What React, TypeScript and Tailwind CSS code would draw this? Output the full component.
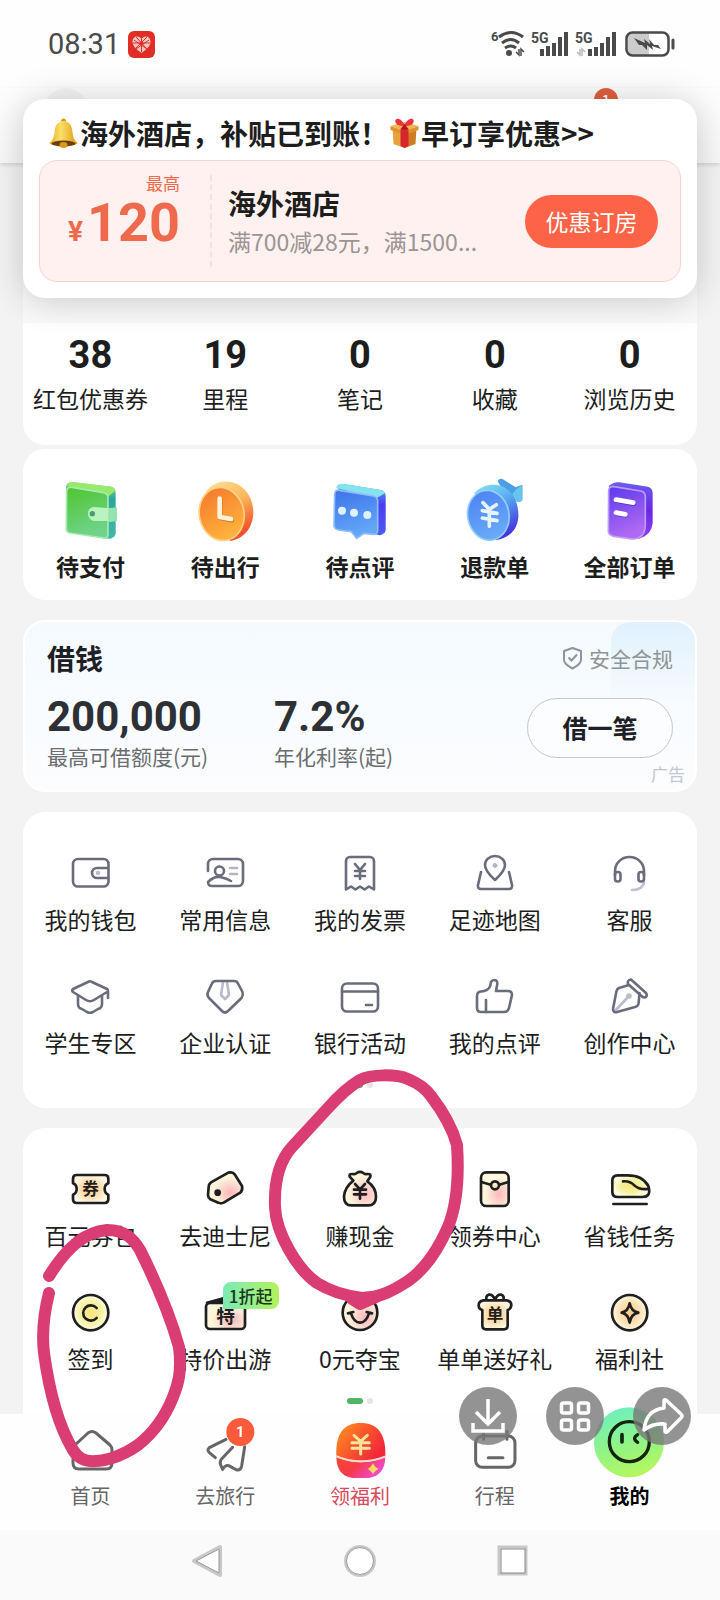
import React from "react";

type Item = { label: string; icon: React.ReactNode; badge?: string };

const DIGITS = "font-[Roboto,'Noto_Sans_CJK_SC',sans-serif]";

/* ---------- status bar ---------- */

function StatusBar() {
  return (
    <header className="flex h-[88px] items-center justify-between bg-[#fefefe] pr-[45px] pl-12">
      <div className="flex items-center gap-2">
        <span className={`${DIGITS} text-[29px] leading-8 text-[#4a4a4a]`}>08:31</span>
        <svg className="h-[27px] w-[27px]" viewBox="0 0 27 27" aria-hidden="true">
          <rect width="27" height="27" rx="6" fill="#e02d26" />
          <path d="M13.500 22C7 17.500 4.500 14 4.500 10.500 4.500 7.500 6.500 5.500 9 5.500c2 0 3.500 1 4.500 2.500C14.500 6.500 16 5.500 18 5.500c2.500 0 4.500 2 4.500 5 0 3.500-2.500 7-9 11.500z" fill="#f9c6c3" />
          <path d="M6 9l13 9M21 9L8 18M13.500 8v13M8 6l11 12M19 6L8 17M5 12h17" stroke="#e02d26" strokeWidth="1" fill="none" />
          <circle cx="13.500" cy="12.500" r="2" fill="#e02d26" />
        </svg>
      </div>
      <svg className="h-[30px] w-[184px]" viewBox="0 0 184 30" aria-label="Wi-Fi 6, 5G, 5G, 电池" role="img">
        <g fill="#4a4a4a" fontFamily="Roboto, sans-serif" fontWeight="700">
          <text x="0" y="12" fontSize="13">6</text>
          <text x="40" y="14" fontSize="14">5G</text>
          <text x="84" y="14" fontSize="14">5G</text>
        </g>
        <g fill="none" stroke="#4a4a4a" strokeWidth="3">
          <path d="M8 8Q20 -1 32 8" />
          <path d="M11 14Q20 7 28 14" />
          <path d="M14 19Q20 15 25 19" />
        </g>
        <circle cx="18" cy="24" r="3" fill="#4a4a4a" />
        <path d="M28 20v6l-3-3M30 27v-7l3 3" stroke="#4a4a4a" strokeWidth="1.500" fill="none" />
        <path d="M89 20v6l-3-3M91 27v-7l3 3" stroke="#bbb" strokeWidth="1.500" fill="none" />
        <g stroke="#4a4a4a" strokeWidth="4">
          <path d="M51 27v-7M57 27v-10M63 27v-13M69 27V8M75 27V3" />
          <path d="M99 27v-7M105 27v-9M111 27v-13M117 27V8M123 27V3" />
        </g>
        <rect x="137" y="4" width="21" height="22" fill="#ccc" />
        <rect x="135.500" y="3.500" width="42" height="23" rx="6" fill="none" stroke="#4a4a4a" strokeWidth="2.500" />
        <path d="M182 11v8" stroke="#4a4a4a" strokeWidth="3" strokeLinecap="round" />
        <path d="M143 9l11 5-1-4 6 5-1-5 5 6h4l3 4-9-3 1 4-6-5v5l-5-5-3 0z" fill="#4a4a4a" />
      </svg>
    </header>
  );
}

function PageHeader() {
  return (
    <div className="flex h-[75px] items-start justify-between bg-linear-to-b from-[#fefefe] to-[#f8f8f8] px-11 shadow-[0_2px_4px_rgba(0,0,0,0.12)]">
      <span className="h-11 w-11 rounded-full bg-[#f6f6f6]" />
      <span className="mr-[58px] flex h-6 w-6 items-center justify-center rounded-full bg-[#e0603f] text-[17px] leading-6 text-white">1</span>
    </div>
  );
}

/* ---------- push notice ---------- */

function Bell() {
  return (
    <svg className="h-8 w-[33px] shrink-0" viewBox="0 0 32 32" aria-hidden="true">
      <defs>
        <linearGradient id="bell" x1="0" x2="1">
          <stop offset="0" stopColor="#e8ac1c" />
          <stop offset="0.400" stopColor="#fbe06a" />
          <stop offset="1" stopColor="#dc9a12" />
        </linearGradient>
      </defs>
      <circle cx="16" cy="4" r="2.500" fill="#d99c1a" />
      <path d="M16 4c-6 0-8.500 5-9 11-.4 5-1.500 8-5 11 0 4 28 4 28 0-3.500-3-4.600-6-5-11-.5-6-3-11-9-11z" fill="url(#bell)" />
      <ellipse cx="16" cy="26.500" rx="12" ry="3" fill="#6b3f10" />
      <ellipse cx="16" cy="28" rx="4" ry="3" fill="#d99a1c" />
    </svg>
  );
}

function Gift() {
  return (
    <svg className="h-8 w-[33px] shrink-0" viewBox="0 0 32 32" aria-hidden="true">
      <path d="M4 11l12 4v16L5 27z" fill="#e8a23a" />
      <path d="M28 11l-12 4v16l11-4z" fill="#cf7c22" />
      <path d="M2 9L16 5l14 4-14 5z" fill="#f3b64c" />
      <path d="M2 9v4l14 5 14-5V9l-14 5z" fill="#de932f" />
      <path d="M12 12v17l4 2 4-2V12l-4 2z" fill="#d8252b" />
      <path d="M15 9C9 9 6 6 7 3c2-3 7 0 9 5 2-5 7-8 9-5 1 3-2 6-8 6z" fill="#ee3340" />
      <path d="M16 7l-4 5 4 2 4-2z" fill="#b8161f" />
    </svg>
  );
}

function PushNotice() {
  return (
    <section className="absolute inset-x-[23px] top-[99px] z-10 rounded-[22px] bg-white px-4 pt-[15px] pb-4 shadow-[0_2px_36px_rgba(0,0,0,0.2)]">
      <h2 className="flex h-[38px] items-center pl-2 text-[28px] leading-[38px] font-bold whitespace-nowrap text-[#1d1d1d]">
        <Bell />
        <span>海外酒店，补贴已到账！</span>
        <Gift />
        <span>早订享优惠&gt;&gt;</span>
      </h2>
      <div className="mt-2 flex h-[122px] items-center rounded-[18px] border border-[#f3d5d0] bg-[#fef1ef] pr-[22px]">
        <div className="flex h-full w-[140px] flex-col items-end pt-3 text-[#ef6a4c]">
          <span className="text-[17px] leading-5">最高</span>
          <div className={`${DIGITS} flex items-baseline gap-1 leading-[60px] font-bold`}>
            <span className="text-[28px]">¥</span>
            <span className="text-[54px]">120</span>
          </div>
        </div>
        <div className="ml-[30px] h-[92px] border-l-2 border-dashed border-[#f3e2df]" />
        <div className="ml-4 min-w-0 flex-1 pt-[2px] whitespace-nowrap">
          <h3 className="text-[28px] leading-[38px] font-bold text-[#1d1d1d]">海外酒店</h3>
          <p className="text-[23px] leading-[38px] text-[#9b9594]">满700减28元，满1500...</p>
        </div>
        <button type="button" className="h-[53px] w-[133px] shrink-0 rounded-full bg-[#fd6447] text-[23px] text-white">优惠订房</button>
      </div>
    </section>
  );
}

/* ---------- statistics ---------- */

const STATS = [
  ["38", "红包优惠券"],
  ["19", "里程"],
  ["0", "笔记"],
  ["0", "收藏"],
  ["0", "浏览历史"],
];

function StatsCard() {
  return (
    <section className="overflow-hidden rounded-b-[22px] bg-white pb-[31px]">
      <div className="h-40 bg-[#f9f9f9]" />
      <div className="grid grid-cols-5 pt-3">
        {STATS.map(([value, label]) => (
          <a key={label} href="#" className="flex flex-col items-center text-[#1d1d1d]">
            <span className={`${DIGITS} text-[38px] leading-10 font-bold`}>{value}</span>
            <span className="mt-[7px] text-[23px] leading-8 whitespace-nowrap">{label}</span>
          </a>
        ))}
      </div>
    </section>
  );
}

/* ---------- orders ---------- */

function OrderSvg({ box, children }: { box: string; children: React.ReactNode }) {
  return (
    <svg className="h-[68px] w-[60px]" viewBox={box} aria-hidden="true">
      {children}
    </svg>
  );
}

const ORDERS: Item[] = [
  {
    label: "待支付",
    icon: (
      <OrderSvg box="60 18 180 204">
        <defs>
          <linearGradient id="wf" x1="0" y1="0" x2="0.300" y2="1"><stop stopColor="#4fc52f" /><stop offset="1" stopColor="#6fd38a" /></linearGradient>
          <linearGradient id="ws" x1="0" y1="0" x2="0" y2="1"><stop stopColor="#8fe36a" /><stop offset="0.300" stopColor="#2ba4a0" /><stop offset="1" stopColor="#43b9a8" /></linearGradient>
        </defs>
        <path d="M78 50Q80 36 98 36L214 50Q227 54 227 68V190Q227 200 212 206L190 205 90 188Z" fill="url(#ws)" />
        <path d="M82 48Q86 36 98 36L214 50Q224 53 226 62L204 80Z" fill="#97e96b" />
        <path d="M80 66Q80 50 96 52L190 68Q204 71 204 84V193Q204 206 192 204L90 189Q79 187 79 176Z" fill="url(#wf)" stroke="#a5ebad" strokeWidth="5" />
        <path d="M160 111L231 116V153L160 153Q144 146 144 132 144 114 160 111Z" fill="#b9f3bd" />
        <path d="M205 115l26-3v41l-26 4z" fill="#94e4af" />
        <circle cx="157" cy="131" r="8" fill="#4a9b72" />
      </OrderSvg>
    ),
  },
  {
    label: "待出行",
    icon: (
      <OrderSvg box="465 18 180 204">
        <defs>
          <linearGradient id="cf" x1="0" y1="0" x2="0.300" y2="1"><stop stopColor="#f4762c" /><stop offset="1" stopColor="#ffb13c" /></linearGradient>
          <linearGradient id="cs" x1="0" y1="0" x2="0.400" y2="1"><stop stopColor="#ffe39a" /><stop offset="0.500" stopColor="#fbb65a" /><stop offset="1" stopColor="#f0522a" /></linearGradient>
        </defs>
        <path d="M500 62C516 40 546 30 574 36 616 46 640 86 640 128 638 176 610 206 570 213Z" fill="url(#cs)" />
        <ellipse cx="545" cy="132" rx="67" ry="80" transform="rotate(-12 545 132)" fill="url(#cf)" stroke="#ffd184" strokeWidth="5" />
        <path d="M541 88V144L575 151" fill="none" stroke="#d96218" strokeWidth="14" strokeLinecap="round" strokeLinejoin="round" opacity="0.600" />
        <path d="M539 86V141L573 147" fill="none" stroke="#fff3d8" strokeWidth="14" strokeLinecap="round" strokeLinejoin="round" />
      </OrderSvg>
    ),
  },
  {
    label: "待点评",
    icon: (
      <OrderSvg box="870 18 180 204">
        <defs>
          <linearGradient id="mf" x1="0" y1="0" x2="0.300" y2="1"><stop stopColor="#3d72ea" /><stop offset="1" stopColor="#63a8f7" /></linearGradient>
          <linearGradient id="ms" x1="0" y1="0" x2="0" y2="1"><stop stopColor="#4db4ef" /><stop offset="0.400" stopColor="#4b3df0" /><stop offset="1" stopColor="#4a5cf2" /></linearGradient>
        </defs>
        <path d="M890 50Q896 40 912 42L1022 60Q1037 64 1037 78V180Q1037 190 1020 196L1000 192Z" fill="url(#ms)" />
        <path d="M888 54Q896 38 914 42L1022 60Q1032 63 1035 70L1010 84Z" fill="#84e3ee" />
        <path d="M884 74Q884 58 898 61L1000 78Q1013 81 1013 94V180Q1013 195 1000 193L972 190 950 205 934 185 896 180Q882 178 882 166Z" fill="url(#mf)" stroke="#8dbcf9" strokeWidth="5" />
        <g fill="#dff0ff"><circle cx="906" cy="122" r="12" /><circle cx="942" cy="128" r="12" /><circle cx="982" cy="135" r="12" /></g>
      </OrderSvg>
    ),
  },
  {
    label: "退款单",
    icon: (
      <OrderSvg box="194 18 180 204">
        <defs>
          <linearGradient id="rf" x1="0" y1="0" x2="0.200" y2="1"><stop stopColor="#4b82f2" /><stop offset="1" stopColor="#69a9f8" /></linearGradient>
          <linearGradient id="rs" x1="0" y1="0" x2="0.500" y2="1"><stop stopColor="#86e8ee" /><stop offset="0.500" stopColor="#58a8f2" /><stop offset="1" stopColor="#4638e0" /></linearGradient>
        </defs>
        <path d="M292 34Q294 24 306 27L346 52 366 44V88Q366 96 352 96L318 78Z" fill="#4a9fe4" />
        <path d="M328 82L348 58 366 44V88Q366 96 352 96Z" fill="#68c4ee" />
        <path d="M222 70C246 42 282 40 308 50 340 64 356 104 354 142 350 182 326 204 286 210Z" fill="url(#rs)" />
        <ellipse cx="264" cy="136" rx="62" ry="75" transform="rotate(-10 264 136)" fill="url(#rf)" stroke="#95cdf9" strokeWidth="5" />
        <path d="M248 98L267 118 288 104M267 118V169M246 122L290 130M246 144L290 152" fill="none" stroke="#e6f4ff" strokeWidth="11" strokeLinecap="round" />
      </OrderSvg>
    ),
  },
  {
    label: "全部订单",
    icon: (
      <OrderSvg box="598 18 180 204">
        <defs>
          <linearGradient id="df" x1="0" y1="0" x2="0.300" y2="1"><stop stopColor="#5b39ee" /><stop offset="1" stopColor="#b06af2" /></linearGradient>
          <linearGradient id="ds" x1="0" y1="0" x2="0" y2="1"><stop stopColor="#6a5cf0" /><stop offset="0.500" stopColor="#6a28e4" /><stop offset="1" stopColor="#8e3df0" /></linearGradient>
        </defs>
        <path d="M624 48Q640 34 656 37L742 50Q756 54 756 70V160Q752 196 716 206L690 200Z" fill="url(#ds)" />
        <path d="M624 62Q624 48 640 50L720 63Q734 66 734 80V166Q732 208 694 207L640 199Q623 196 623 184Z" fill="url(#df)" stroke="#bd9cf8" strokeWidth="5" />
        <path d="M648 92L700 101M648 131L674 136" stroke="#4a20b0" strokeWidth="14" strokeLinecap="round" opacity="0.600" />
        <path d="M646 89L698 98M646 128L674 133" stroke="#fff" strokeWidth="14" strokeLinecap="round" />
      </OrderSvg>
    ),
  },
];

function OrdersCard() {
  return (
    <nav aria-label="订单" className="mt-1 grid grid-cols-5 rounded-[22px] bg-white pt-[27px] pb-[18px]">
      {ORDERS.map((item) => (
        <a key={item.label} href="#" className="flex flex-col items-center">
          {item.icon}
          <span className="mt-[6px] text-[23px] leading-8 font-bold whitespace-nowrap text-[#1d1d1d]">{item.label}</span>
        </a>
      ))}
    </nav>
  );
}

/* ---------- loan ---------- */

function LoanCard() {
  return (
    <section className="relative mt-5 h-[172px] rounded-[22px] border-2 border-white bg-linear-to-b from-[#f4fafe] to-[#fcfdff] px-[22px] pt-[15px]">
      <div className="absolute top-0 right-0 h-20 w-[84px] rounded-tl-[20px] rounded-tr-[20px] bg-linear-to-b from-[#e0f1fd] to-[#f7fbfe]" />
      <div className="relative flex h-[42px] items-center justify-between">
        <h2 className="text-[28px] leading-10 font-bold text-[#1d2126]">借钱</h2>
        <span className="flex items-center gap-[6px] text-[21px] leading-8 text-[#8e9499]">
          <svg className="h-[24px] w-[21px]" viewBox="0 0 21 24" fill="none" stroke="#8e9499" strokeWidth="2" aria-hidden="true">
            <path d="M10.500 2L19 5v9q0 4-8.500 8.500Q2 18 2 14V5z" strokeLinejoin="round" />
            <path d="M6.500 11.500l3 3 5.500-6" />
          </svg>
          安全合规
        </span>
      </div>
      <div className="relative mt-[15px] flex items-start">
        <div className="w-[227px]">
          <div className={`${DIGITS} text-[42px] leading-[46px] font-bold text-[#2d3035]`}>200,000</div>
          <div className="text-[21px] leading-8 text-[#6a6d70]">最高可借额度(元)</div>
        </div>
        <div className="flex-1">
          <div className={`${DIGITS} text-[42px] leading-[46px] font-bold text-[#2d3035]`}>7.2%</div>
          <div className="text-[21px] leading-8 text-[#6a6d70]">年化利率(起)</div>
        </div>
        <button type="button" className="mt-1 h-[60px] w-[146px] rounded-full border border-[#c4c8cb] bg-[#fbfdff] text-[25px] font-bold text-[#1d2126]">借一笔</button>
      </div>
      <span className="absolute right-[10px] bottom-1 text-[17px] leading-6 text-[#c3c6ca]">广告</span>
    </section>
  );
}

/* ---------- services ---------- */

function LineSvg({ children }: { children: React.ReactNode }) {
  return (
    <svg className="h-11 w-11" viewBox="0 0 44 44" fill="none" stroke="#696c7a" strokeWidth="2.600" strokeLinecap="round" strokeLinejoin="round" aria-hidden="true">
      {children}
    </svg>
  );
}

const SERVICES: Item[] = [
  {
    label: "我的钱包",
    icon: (
      <LineSvg>
        <rect x="5" y="8" width="35.500" height="27.500" rx="5" />
        <path d="M40 17H29a5 5 0 0 0 0 10h11" />
        <circle cx="30" cy="22" r="1" stroke="#b9bacb" />
      </LineSvg>
    ),
  },
  {
    label: "常用信息",
    icon: (
      <LineSvg>
        <path d="M5 20V13a5 5 0 0 1 5-5h25a5 5 0 0 1 5 5v17a5 5 0 0 1-5 5H9q-4 0-4-4 6-6 12-5t11 4" />
        <circle cx="16.500" cy="20" r="4.500" />
        <path d="M27 17h7M27 23h7" stroke="#b4b5c0" />
      </LineSvg>
    ),
  },
  {
    label: "我的发票",
    icon: (
      <LineSvg>
        <path d="M8 38.500V10a4 4 0 0 1 4-4h20a4 4 0 0 1 4 4v28.500l-5-3-4.500 3-4.500-3-4.500 3-4.500-3z" />
        <path d="M17 13l5 6 5-6M22 19v9M17 20h10M17 25h10" />
      </LineSvg>
    ),
  },
  {
    label: "足迹地图",
    icon: (
      <LineSvg>
        <path d="M22 29q-10-9-10-15a10 9 0 0 1 20 0q0 6-10 15z" />
        <circle cx="22" cy="14.500" r="2" fill="#b4b5c0" stroke="#b4b5c0" strokeWidth="1" />
        <path d="M8 21L5 34q-.5 4 3 4h28q3.500 0 3-4l-3-13" />
      </LineSvg>
    ),
  },
  {
    label: "客服",
    icon: (
      <LineSvg>
        <path d="M36 31q-1 8-12 8" stroke="#c0c1cb" />
        <path d="M7 24V20a14.500 14 0 0 1 29 0v4" />
        <rect x="7" y="21" width="5.500" height="9.500" rx="2.500" />
        <rect x="30.500" y="21" width="5.500" height="9.500" rx="2.500" />
      </LineSvg>
    ),
  },
  {
    label: "学生专区",
    icon: (
      <LineSvg>
        <path d="M20 8Q22 6.500 24 8L39 15q2 1.500 0 3L26 26q-4 2.500-8 0L5 18q-1.500-1.500 0-3zM40 17v7" />
        <path d="M10 22v8q0 4 4 5l5 3q3 1.500 6 0l5-3q4-1 4-5v-8" />
      </LineSvg>
    ),
  },
  {
    label: "企业认证",
    icon: (
      <LineSvg>
        <path d="M20 8l-2 13 4 4 4-4-2-13" stroke="#b9bacb" />
        <path d="M13 7h18q3 0 4 2.500L39.500 18q1 3-1 6L25 37q-3 3-6 0L6 24q-2.500-3-1-6L9 9.500Q10 7 13 7z" />
      </LineSvg>
    ),
  },
  {
    label: "银行活动",
    icon: (
      <LineSvg>
        <rect x="4" y="9.500" width="36" height="28" rx="5" />
        <path d="M4 17.500h36M28 31h6" />
      </LineSvg>
    ),
  },
  {
    label: "我的点评",
    icon: (
      <LineSvg>
        <path d="M11 38H8q-4 0-4-4V22q0-4 4-4.500 7-.5 9-5L18 8q2-3 5-1.500 2 1 1 5L23 17h12q4 0 4 4l-3 13q-1 4-5 4z" />
        <path d="M13 26v12" />
      </LineSvg>
    ),
  },
  {
    label: "创作中心",
    icon: (
      <LineSvg>
        <path d="M7 37l13-14" stroke="#b9bacb" />
        <circle cx="21" cy="22" r="1.500" stroke="#b9bacb" />
        <path d="M21 11L11 14q-2 1-2.500 3L5 35q0 4 4 3l18-5q3-1 3.500-3l1-11" />
        <path d="M20 10q-1-4 3-4.500L38 19q2 3-1 4.500-2 0-3-1z" />
      </LineSvg>
    ),
  },
];

function Dots() {
  return (
    <div className="flex items-center justify-center gap-1 pt-[9px]">
      <span className="h-[6px] w-4 rounded-full bg-[#52b565]" />
      <span className="h-[6px] w-[6px] rounded-full bg-[#e4e4e4]" />
    </div>
  );
}

function IconGrid({ items }: { items: Item[] }) {
  return (
    <div className="grid grid-cols-5 gap-y-6">
      {items.map((item) => (
        <a key={item.label} href="#" className="relative flex flex-col items-center">
          {item.icon}
          <span className="mt-2 h-[47px] text-[23px] leading-8 whitespace-nowrap text-[#1d1d1d]">{item.label}</span>
          {item.badge && (
            <span className="absolute -top-2 left-[65px] rounded-lg rounded-bl-none bg-linear-to-r from-[#7beab3] to-[#b3f159] px-[6px] text-[17px] leading-[27px] font-medium whitespace-nowrap text-[#163a20]">
              {item.badge}
            </span>
          )}
        </a>
      ))}
    </div>
  );
}

/* ---------- welfare ---------- */

function FunSvg({ box, children }: { box: string; children: React.ReactNode }) {
  return (
    <svg className="h-11 w-11" viewBox={box} fill="none" stroke="#1f1f1f" strokeWidth="8" strokeLinecap="round" strokeLinejoin="round" aria-hidden="true">
      {children}
    </svg>
  );
}

function FunDefs() {
  return (
    <svg className="absolute h-0 w-0" aria-hidden="true">
      <defs>
        <radialGradient id="peach"><stop stopColor="#ffc98f" /><stop offset="0.600" stopColor="#fde0b4" /><stop offset="1" stopColor="#fff8e4" /></radialGradient>
        <radialGradient id="rose" cx="0.650" cy="0.650"><stop stopColor="#ffb6bb" /><stop offset="0.600" stopColor="#fbdcd0" /><stop offset="1" stopColor="#fff6de" /></radialGradient>
        <radialGradient id="lemon"><stop stopColor="#ffe27e" /><stop offset="0.600" stopColor="#f4f3a0" /><stop offset="1" stopColor="#fffde8" /></radialGradient>
      </defs>
    </svg>
  );
}

const GLYPH = { fill: "#1f1f1f", stroke: "none", fontFamily: "'Noto Sans CJK SC', sans-serif", fontWeight: 700, textAnchor: "middle" as const };

const WELFARE: Item[] = [
  {
    label: "百元券包",
    icon: (
      <FunSvg box="204 321 132 132">
        <path d="M230 345H314Q325 345 325 356V370Q314 374 314 387 314 400 325 404V418Q325 429 314 429H230Q219 429 219 418V404Q230 400 230 387 230 374 219 370V356Q219 345 230 345Z" fill="url(#peach)" />
        <text x="272" y="406" fontSize="50" {...GLYPH}>券</text>
      </FunSvg>
    ),
  },
  {
    label: "去迪士尼",
    icon: (
      <FunSvg box="608 321 132 132">
        <path d="M625 381Q625 372 632 367L684 338Q696 335 703 343L725 378Q728 390 720 398L670 428Q662 432 654 428L630 418Q623 412 623 405Z" fill="url(#rose)" />
        <circle cx="652" cy="398" r="6" fill="#1f1f1f" />
      </FunSvg>
    ),
  },
  {
    label: "赚现金",
    icon: (
      <FunSvg box="-66 321 132 132">
        <path d="M-20 362L-31 350Q-34 341-22 342-14 344-10 339 0 332 10 339 14 344 22 342 34 341 31 350L22 364Q48 382 48 410 48 436 24 436H-26Q-48 436-48 410-46 382-20 362Z" fill="url(#rose)" />
        <path d="M-15 372L0 388 15 372M0 388V416M-18 389H18M-18 403H18" />
      </FunSvg>
    ),
  },
  {
    label: "领券中心",
    icon: (
      <FunSvg box="337 321 132 132">
        <rect x="361" y="337" width="83" height="101" rx="16" fill="url(#rose)" />
        <path d="M362 366L390 374M416 374L443 366" />
        <circle cx="403" cy="376" r="12" fill="#ffe9c4" />
      </FunSvg>
    ),
  },
  {
    label: "省钱任务",
    icon: (
      <FunSvg box="741 321 132 132">
        <path d="M770 346H800Q845 346 862 378 872 410 845 411H770Q754 411 754 396V362Q754 346 770 346Z" fill="url(#lemon)" />
        <path d="M786 364Q806 362 820 376T862 387M757 432H857" />
      </FunSvg>
    ),
  },
  {
    label: "签到",
    icon: (
      <FunSvg box="204 690 132 132">
        <circle cx="272" cy="758" r="53" fill="url(#lemon)" />
        <path d="M290 744A23 23 0 1 0 290 774" />
      </FunSvg>
    ),
  },
  {
    label: "特价出游",
    badge: "1折起",
    icon: (
      <FunSvg box="608 690 132 132">
        <path d="M620 728L680 712V728Z" fill="#1f1f1f" />
        <rect x="617" y="729" width="117" height="78" rx="12" fill="url(#rose)" />
        <text x="676" y="788" fontSize="56" {...GLYPH}>特</text>
      </FunSvg>
    ),
  },
  {
    label: "0元夺宝",
    icon: (
      <FunSvg box="-66 690 132 132">
        <circle cx="0" cy="758" r="52" fill="url(#rose)" />
        <path d="M-36 760L-20 756M36 760L20 756M-27 760Q-18 788 0 788T27 760" />
      </FunSvg>
    ),
  },
  {
    label: "单单送好礼",
    icon: (
      <FunSvg box="337 690 132 132">
        <path d="M403 719Q396 702 384 704 374 708 378 720M403 719Q410 702 422 704 432 708 428 720" />
        <path d="M368 721H438Q452 723 452 736 450 748 441 750V796Q441 808 430 808H376Q365 808 365 796V750Q354 748 354 736 354 723 368 721Z" fill="url(#peach)" />
        <text x="403" y="784" fontSize="50" {...GLYPH}>单</text>
      </FunSvg>
    ),
  },
  {
    label: "福利社",
    icon: (
      <FunSvg box="741 690 132 132">
        <circle cx="806" cy="758" r="53" fill="url(#peach)" />
        <path d="M806 730Q810 754 832 758 810 762 806 788 802 762 782 758 802 754 806 730Z" />
      </FunSvg>
    ),
  },
];

/* ---------- bottom tabs ---------- */

function TabSvg({ children }: { children: React.ReactNode }) {
  return (
    <svg className="h-[72px] w-[72px] shrink-0" viewBox="0 0 72 72" fill="none" strokeLinecap="round" strokeLinejoin="round" aria-hidden="true">
      {children}
    </svg>
  );
}

const TABS = [
  {
    label: "首页",
    tone: "text-[#666666]",
    icon: (
      <TabSvg>
        <path d="M34 27q4-3 8 0l14 12q2 2 2 5v13q0 6-6 6H25q-6 0-6-6V44q0-3 2-5z" stroke="#666" strokeWidth="3" />
      </TabSvg>
    ),
  },
  {
    label: "去旅行",
    tone: "text-[#666666]",
    icon: (
      <TabSvg>
        <g transform="translate(1 -6) scale(0.3333)">
          <path d="M108 118L58 143Q50 150 58 158L76 173M128 142L94 178Q88 186 92 195L98 208Q108 190 122 200L140 210Q152 212 155 198L164 140" stroke="#666" strokeWidth="9" />
          <circle cx="151" cy="96" r="42" fill="#fb5a3b" />
          <text x="151" y="111" fontSize="44" fontWeight="700" fontFamily="Roboto, sans-serif" fill="#fff" textAnchor="middle">1</text>
        </g>
      </TabSvg>
    ),
  },
  {
    label: "领福利",
    tone: "text-[#d9495c]",
    icon: (
      <TabSvg>
        <defs>
          <linearGradient id="hat" x1="0" y1="0" x2="1" y2="0.600"><stop stopColor="#ff9a1f" /><stop offset="0.500" stopColor="#fa5a2a" /><stop offset="1" stopColor="#f2253b" /></linearGradient>
          <linearGradient id="hatb" x1="0" y1="0" x2="1" y2="0.500"><stop stopColor="#f5492b" /><stop offset="0.500" stopColor="#f53b4a" /><stop offset="1" stopColor="#f04ad8" /></linearGradient>
        </defs>
        <g transform="translate(-134 -6) scale(0.3333)">
          <path d="M439 168C436 100 462 69 512 69 562 69 588 100 586 168Q512 198 439 168Z" fill="url(#hat)" />
          <path d="M439 172Q512 202 586 172C584 218 562 236 512 236 462 236 441 218 439 172Z" fill="url(#hatb)" />
          <path d="M440 169Q512 198 585 170" stroke="#ffd9d2" strokeWidth="6" />
          <path d="M492 106L512 124 532 106M512 124V162M486 128H538M486 145H538" stroke="#ffe49a" strokeWidth="9" />
          <path d="M549 190L556 200 565 207 556 214 549 222 542 214 534 207 542 200Z" fill="#ffd95c" />
        </g>
      </TabSvg>
    ),
  },
  {
    label: "行程",
    tone: "text-[#666666]",
    icon: (
      <TabSvg>
        <g transform="translate(-268 -6) scale(0.3333)" stroke="#666" strokeWidth="9">
          <rect x="854" y="108" width="118" height="94" rx="20" />
          <path d="M878 94V118M948 94V118M892 173H936" />
        </g>
      </TabSvg>
    ),
  },
  {
    label: "我的",
    tone: "font-bold text-black",
    icon: (
      <TabSvg>
        <defs>
          <linearGradient id="me" x1="0.300" y1="0" x2="0.600" y2="1"><stop stopColor="#6ff0c0" /><stop offset="0.500" stopColor="#8ef38a" /><stop offset="1" stopColor="#b6f75a" /></linearGradient>
        </defs>
        <g transform="translate(-153 -36) scale(0.3333)">
          <circle cx="564" cy="217" r="105" fill="url(#me)" />
          <circle cx="565" cy="215" r="60" stroke="#14240f" strokeWidth="10" />
          <path d="M543 194V216" stroke="#14240f" strokeWidth="11" />
          <path d="M590 194Q572 205 590 217" stroke="#14240f" strokeWidth="10" />
        </g>
      </TabSvg>
    ),
  },
];

function TabBar() {
  return (
    <nav aria-label="主导航" className="grid grid-cols-5 bg-[#fefefe] px-[23px] pb-[19px]">
      {TABS.map((tab) => (
        <a key={tab.label} href="#" className="flex flex-col items-center">
          <span className="flex h-14 items-center">{tab.icon}</span>
          <span className={`mt-[11px] text-[20px] leading-[30px] ${tab.tone}`}>{tab.label}</span>
        </a>
      ))}
    </nav>
  );
}

function SystemBar() {
  return (
    <footer className="flex flex-1 items-center justify-center gap-[117px] bg-[#fafafa] pb-2">
      <button type="button" aria-label="返回">
        <svg className="h-9 w-9" viewBox="0 0 36 36" fill="#fff" strokeLinejoin="round">
          <path d="M31 4v28L5 18z" stroke="#c8c8c8" strokeWidth="4" />
          <path d="M30 6v24L7 18z" stroke="#999" strokeWidth="1" />
        </svg>
      </button>
      <button type="button" aria-label="主屏幕">
        <svg className="h-9 w-9" viewBox="0 0 36 36" fill="#fff">
          <circle cx="18" cy="18" r="14.500" stroke="#c8c8c8" strokeWidth="3" />
          <circle cx="18" cy="18" r="13.500" stroke="#999" strokeWidth="1" />
        </svg>
      </button>
      <button type="button" aria-label="最近任务">
        <svg className="h-9 w-9" viewBox="0 0 36 36" fill="#fff">
          <rect x="4" y="4" width="27" height="27" stroke="#c8c8c8" strokeWidth="3" />
          <rect x="6" y="6" width="24" height="24" stroke="#888" strokeWidth="1" />
        </svg>
      </button>
    </footer>
  );
}

/* ---------- overlays ---------- */

function Doodles() {
  return (
    <svg className="pointer-events-none absolute top-0 left-0 z-20 h-[1600px] w-[720px]" viewBox="0 0 720 1600" fill="none" stroke="#da3c74" strokeWidth="12" strokeLinecap="round" strokeLinejoin="round" aria-hidden="true">
      <path d="M362 1298C340 1295 325 1288 317 1283 298 1270 276 1234 275 1207 274 1178 280 1160 292 1147L328 1108Q345 1089 360 1080C371 1074 396 1074 408 1079 420 1084 426 1089 431 1096 444 1113 453 1130 457 1145 459 1175 457 1205 448 1227 437 1252 424 1270 408 1281 394 1290 380 1298 362 1298Z" />
      <path d="M352 1299L376 1297 360 1304Z" />
      <path d="M49 1276C67 1247 85 1232 107 1230 126 1230 134 1240 140 1250 160 1290 172 1322 179 1347 182 1372 178 1385 173 1397 164 1420 152 1434 138 1445 118 1459 101 1461 96 1461 84 1462 78 1458 73 1450 55 1420 47 1375 44 1353 41 1328 46 1305 49 1293" />
    </svg>
  );
}

function FloatingActions() {
  const cls = "flex h-[58px] w-[58px] items-center justify-center rounded-full bg-[#787878]/80";
  return (
    <div className="absolute right-[29px] bottom-[155px] z-30 flex gap-[29px]">
      <button type="button" aria-label="下载" className={cls}>
        <svg className="h-9 w-9" viewBox="0 0 36 36" fill="none" stroke="#fff" strokeWidth="3.500">
          <path d="M18 1v24M6 14l12 12 12-12M3 25v8h30v-8" />
        </svg>
      </button>
      <button type="button" aria-label="更多" className={cls}>
        <svg className="h-9 w-9" viewBox="0 0 36 36" fill="none" stroke="#fff" strokeWidth="3.500">
          <rect x="4.500" y="5" width="10" height="10" rx="2" />
          <rect x="21.500" y="5" width="10" height="10" rx="2" />
          <rect x="4.500" y="22" width="10" height="10" rx="2" />
          <rect x="21.500" y="22" width="10" height="10" rx="2" />
        </svg>
      </button>
      <button type="button" aria-label="分享" className={cls}>
        <svg className="h-11 w-11" viewBox="0 0 44 44" fill="none" stroke="#fff" strokeWidth="3.500" strokeLinejoin="round">
          <path d="M24 7q0-2 2-1l15 14q2 2 0 4L27 38q-2 1-2-1v-7q-12-1-21 6Q6 16 24 14z" />
        </svg>
      </button>
    </div>
  );
}

export default function App() {
  return (
    <div className="relative flex min-h-screen flex-col overflow-hidden bg-[#f3f3f3] font-['Noto_Sans_CJK_SC',sans-serif]">
      <FunDefs />
      <StatusBar />
      <PageHeader />
      <PushNotice />
      <main className="px-[23px]">
        <StatsCard />
        <OrdersCard />
        <LoanCard />
        <section className="mt-5 rounded-[22px] bg-white pt-[39px] pb-5">
          <IconGrid items={SERVICES} />
          <Dots />
        </section>
        <section className="mt-5 rounded-t-[22px] bg-white pt-[39px] pb-[10px]">
          <IconGrid items={WELFARE} />
          <Dots />
        </section>
      </main>
      <TabBar />
      <SystemBar />
      <Doodles />
      <FloatingActions />
    </div>
  );
}
